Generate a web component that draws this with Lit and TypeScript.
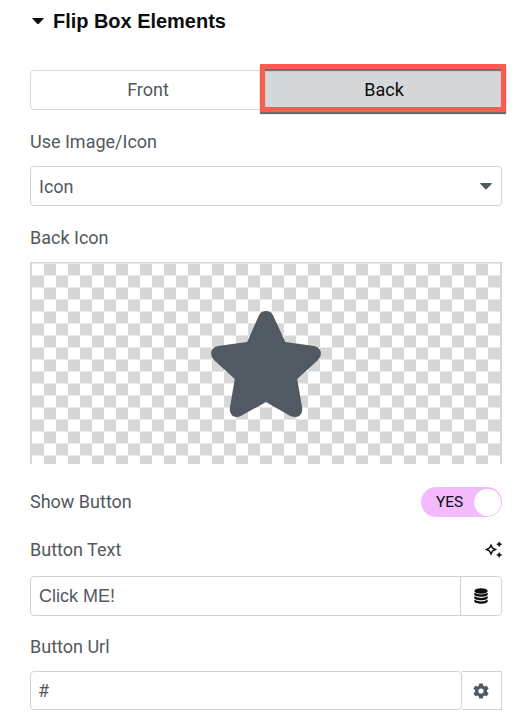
import { LitElement, html, css } from "lit";
import { customElement, state } from "lit/decorators.js";
import { classMap } from "lit/directives/class-map.js";

@customElement("app-root")
export class AppRoot extends LitElement {
  @state() private tab: "front" | "back" = "back";

  static styles = css`
    :host {
      display: block;
      box-sizing: border-box;
      width: 522px;
      height: 724px;
      padding: 0 20px 0 30px;
      overflow: hidden;
      background: #fff;
      color: #53585e;
      font: 18px/24px Roboto, "Liberation Sans", sans-serif;
    }
    * { box-sizing: border-box; }
    svg { display: block; flex: none; }
    .heading {
      display: flex;
      align-items: center;
      gap: 8px;
      height: 41px;
      padding-left: 1px;
      margin: 0;
      color: #0c0d0e;
      font: bold 20px/24px "Liberation Sans", sans-serif;
      letter-spacing: -0.03px;
    }
    .tabs {
      display: flex;
      width: 472px;
      height: 40px;
      margin-top: 29px;
    }
    .tab {
      flex: 1;
      display: flex;
      align-items: center;
      justify-content: center;
      border: 1px solid #d5d7da;
      border-radius: 4px 0 0 4px;
      cursor: pointer;
    }
    .tab + .tab { border-radius: 0 4px 4px 0; }
    .tab.active {
      position: relative;
      background: #d5d7d9;
      color: #0c0d0e;
    }
    .tab.active::after {
      content: "";
      position: absolute;
      inset: -7px -5px -3px -7px;
      border: 5px solid #fc5b50;
      box-shadow: 0 2px 1px #6b6b6b, inset 0 2px 1px #6b6b6b;
    }
    .label {
      display: flex;
      align-items: center;
      justify-content: space-between;
      height: 24px;
    }
    .field {
      display: flex;
      height: 40px;
      border: 1px solid #d0d2d5;
      border-radius: 4px;
    }
    .value {
      flex: 1;
      display: flex;
      align-items: center;
      padding-left: 8px;
    }
    .select { padding: 1px 9px 0 0; align-items: center; }
    .add {
      display: flex;
      align-items: center;
      justify-content: center;
      width: 41px;
      border-left: 1px solid #d0d2d5;
    }
    .joined { height: 39px; border: 0; }
    .joined .value {
      padding-left: 7px;
      border: 1px solid #d0d2d5;
      border-radius: 4px;
    }
    .joined .add {
      width: 40px;
      padding-right: 1px;
      border: 1px solid #d0d2d5;
      border-left: 0;
    }
    .arial { font-family: "Liberation Sans", sans-serif; }
    .preview {
      display: flex;
      justify-content: center;
      height: 202px;
      padding-top: 48px;
      border: 2px solid #d5d7d9;
      border-top-width: 1px;
      border-bottom: 0;
      background: repeating-conic-gradient(#fff 0 25%, #d5d7d9 0 50%) 0 -11.500px / 24px 24px;
    }
    .switch {
      display: flex;
      align-items: center;
      justify-content: space-between;
      width: 81px;
      height: 30px;
      padding: 0 1px 0 15px;
      border-radius: 15px;
      background: #f3bafd;
      color: #0c0d0e;
      font-size: 15.500px;
    }
    .knob {
      width: 27px;
      height: 27px;
      border-radius: 50%;
      background: #fff;
    }
    .g1 { margin-top: 20px; }
    .g2 { margin-top: 12px; }
    .g3 { margin-top: 20px; }
    .g4 { margin-top: 26px; }
    .g5 { margin-top: 24px; }
    .g6 { margin-top: 14px; }
    .g7 { margin-top: 19px; }
  `;

  private renderTab(id: "front" | "back", text: string) {
    return html`<div
      class=${classMap({ tab: true, active: this.tab === id })}
      @click=${() => (this.tab = id)}
    >${text}</div>`;
  }

  render() {
    return html`
      <h1 class="heading">
        <svg width="14" height="8" viewBox="0 0 14 8"><path d="M1.500 1h11q.6 0 .2.6L7.800 6.800q-.8.8-1.600 0L1.300 1.600Q.9 1 1.500 1Z" fill="#0c0d0e" /></svg>
        <span>Flip Box Elements</span>
      </h1>
      <div class="tabs">${this.renderTab("front", "Front")}${this.renderTab("back", "Back")}</div>

      <div class="label g1">Use Image/Icon</div>
      <div class="field select g2">
        <div class="value">Icon</div>
        <svg width="12" height="7" viewBox="0 0 12 7"><path d="M.7 0h10.600q1 .1.3.9L6.800 5.900q-.8.7-1.600 0L.4.9Q-.3.1.7 0Z" fill="#515962" /></svg>
      </div>

      <div class="label g3">Back Icon</div>
      <div class="preview g2">
        <svg width="110" height="106" viewBox="0 0 111 106" preserveAspectRatio="none">
          <path d="M48.500 4Q51 0 55.500 0Q60 0 62.500 4L75 31L104 35Q109 36 110.500 40Q112 45 108 49L87 68L92 97Q92.500 102 89 105Q85 107 80 105L55.500 91L30 105Q26 107 22 105Q18.500 102 19 97L24 68L3 49Q-1 45 .5 40Q2 36 7 35L36.500 31Z" fill="#515962" />
        </svg>
      </div>

      <div class="label g4">
        <span>Show Button</span>
        <div class="switch"><span>YES</span><i class="knob"></i></div>
      </div>

      <div class="label g5">
        <span>Button Text</span>
        <svg width="18" height="18" viewBox="0 0 18 18" fill="#0c0d0e">
          <path d="M7 2.400L9 6.600 13.200 8.600 9 10.600 7 14.800 5 10.600 .8 8.600 5 6.600ZM7 5.900L6 7.600 4.300 8.600 6 9.600 7 11.300 8 9.600 9.700 8.600 8 7.600Z" fill-rule="evenodd" />
          <path d="M15.200.8l.8 1.600 1.700.8-1.700.8-.8 1.700-.8-1.700-1.700-.8 1.700-.8ZM15.200 11.500l.8 1.600 1.700.8-1.700.8-.8 1.700-.8-1.700-1.700-.8 1.700-.8Z" stroke="#0c0d0e" stroke-width=".6" />
        </svg>
      </div>
      <div class="field g6">
        <div class="value arial">Click ME!</div>
        <div class="add">
          <svg width="14" height="16" viewBox="0 0 14 16" fill="#0c0d0e">
            <ellipse cx="7" cy="3" rx="6.700" ry="2.800" />
            <path d="M.3 4.700q6.700 3.500 13.400 0v1.700c0 3-13.400 3-13.400 0ZM.3 8.300q6.700 3.500 13.400 0v1.700c0 3-13.400 3-13.400 0ZM.3 11.800q6.700 3.500 13.400 0v1.500c0 3.300-13.400 3.300-13.400 0Z" />
          </svg>
        </div>
      </div>

      <div class="label g7">Button Url</div>
      <div class="field joined g2">
        <div class="value">#</div>
        <div class="add">
          <svg width="16" height="16" viewBox="0 0 16 16">
            <path d="M6.200.5h3.600l.5 2.200 1.400.8 2.100-.8 1.800 3.100-1.700 1.500v1.400l1.700 1.500-1.800 3.100-2.100-.8-1.400.8-.5 2.200H6.200l-.5-2.200-1.400-.8-2.100.8-1.800-3.100 1.700-1.500V7.300L.4 5.800l1.800-3.100 2.100.8 1.400-.8ZM8 5.400a2.600 2.600 0 1 0 0 5.200 2.600 2.600 0 1 0 0-5.200Z" fill="#515962" fill-rule="evenodd" />
          </svg>
        </div>
      </div>
    `;
  }
}
